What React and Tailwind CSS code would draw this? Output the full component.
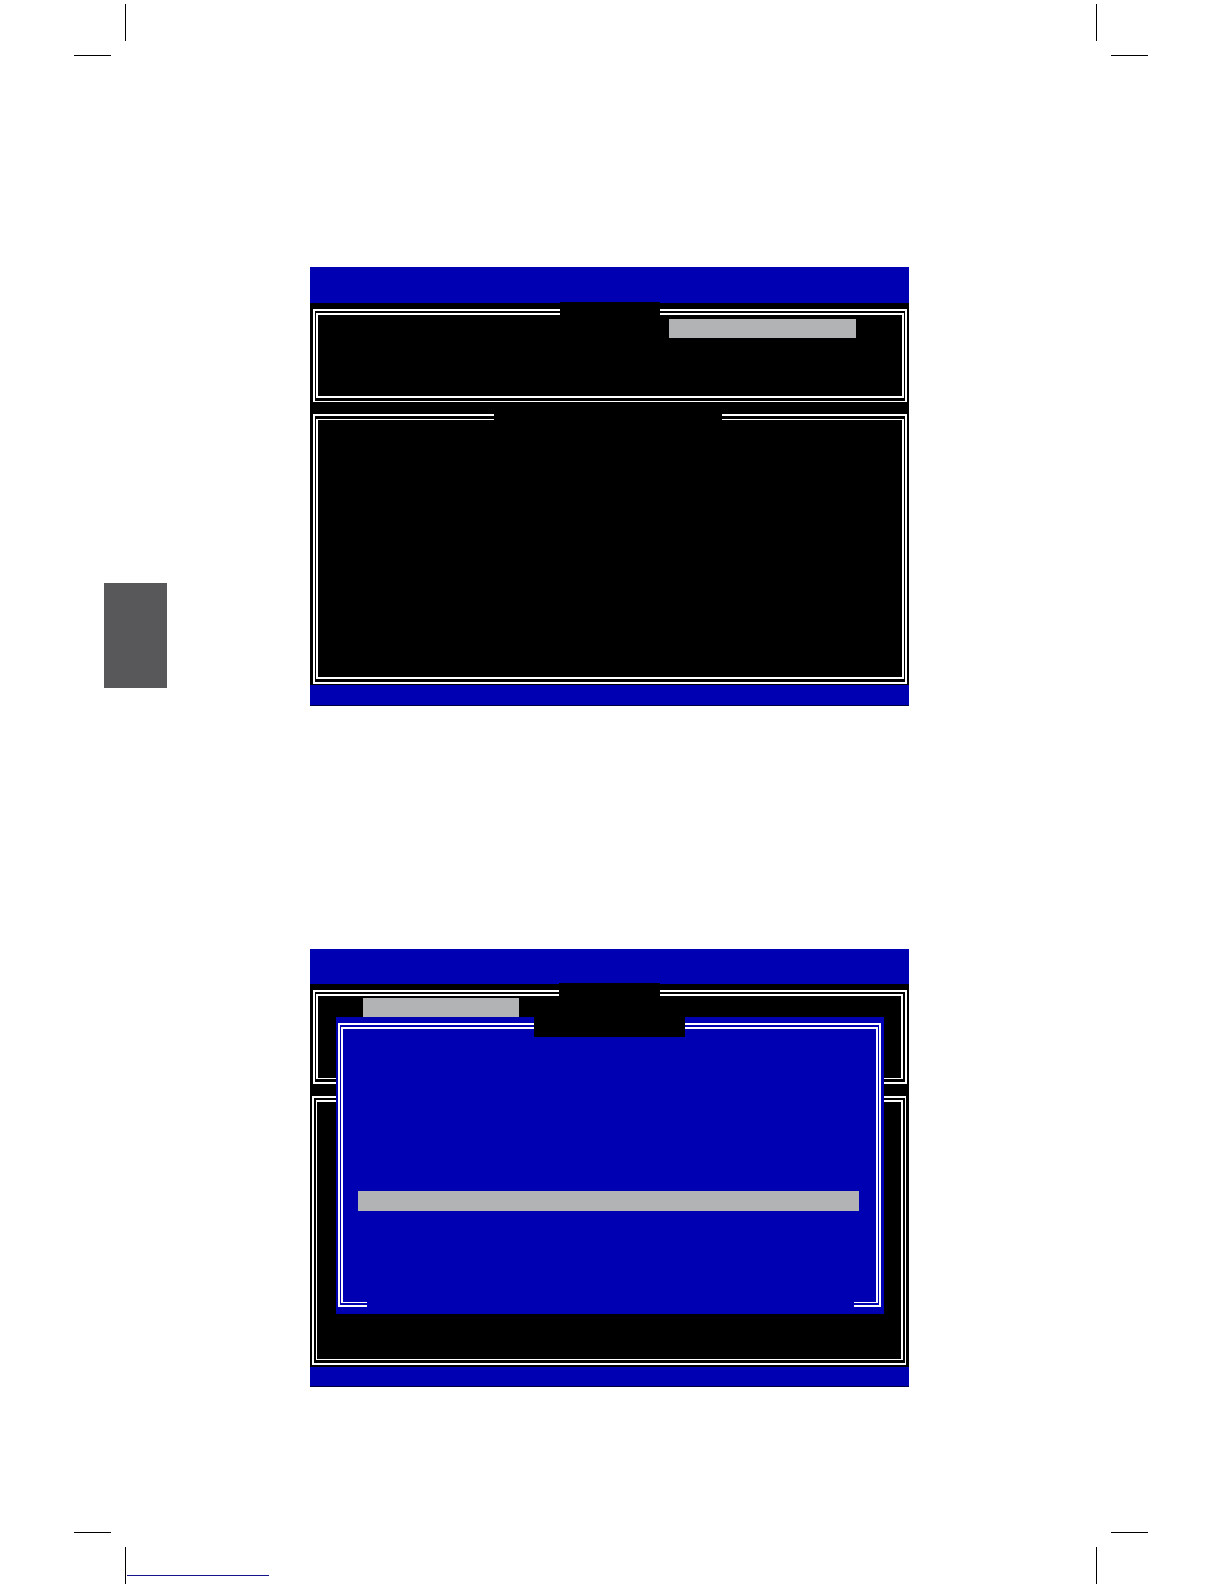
function CropMark({ side = 'left', bottom = false }) {
  const row = side === 'left' ? 'flex-row' : 'flex-row-reverse'
  return (
    <div className={`flex h-[52px] w-[52px] shrink-0 justify-between ${row}`}>
      <div className={`h-px w-[37px] bg-black ${bottom ? 'self-start' : 'self-end'}`}></div>
      <div className={`h-[37px] w-px bg-black ${bottom ? 'self-end' : 'self-start'}`}></div>
    </div>
  )
}

// double line box, the title block covers part of the top border
function Frame({ className = '', outer, inner, title, children }) {
  return (
    <section className={`relative flex border-white ${outer} ${className}`}>
      <div className={`min-w-0 flex-1 border-white ${inner}`}>{children}</div>
      {title && <div className={`absolute bg-black ${title}`}></div>}
    </section>
  )
}

function BiosScreen({ header, footer, children }) {
  return (
    <div className="relative flex flex-col bg-black">
      <header className={`bg-[#0000b3] ${header}`}></header>
      {children}
      <footer className={`border-b border-[#00003c] bg-[#0000b3] ${footer}`}></footer>
    </div>
  )
}

function MenuScreen() {
  return (
    <BiosScreen header="h-9" footer="h-[21px]">
      <div className="flex flex-col gap-3 pt-1.5 pr-0.5 pb-px pl-[3px]">
        <Frame
          className="min-h-[93px]"
          outer="border-2 border-b px-px pt-0.5 pb-[3px]"
          inner="border-2"
          title="-top-[9px] left-[245px] h-4 w-[100px]"
        >
          <div className="mt-1 mr-[46px] ml-auto h-[19px] w-[187px] bg-[#b1b3b4]"></div>
        </Frame>
        <Frame
          className="min-h-[270px]"
          outer="border-2 px-px py-[3px]"
          inner="border-2 border-t"
          title="-top-1 left-[179px] h-3 w-[228px]"
        />
      </div>
    </BiosScreen>
  )
}

function DialogScreen() {
  return (
    <BiosScreen header="h-[35px]" footer="h-5">
      <div className="flex flex-col gap-3 pt-1.5 pb-0.5">
        <Frame
          className="mr-0.5 ml-[3px] min-h-[94px]"
          outer="border-2 pt-0.5 pr-0.5 pb-[3px] pl-px"
          inner="border-2 border-b"
          title="-top-[9px] left-[244px] h-10 w-[101px]"
        >
          <div className="mt-0.5 ml-[45px] h-[19px] w-[156px] bg-[#b1b3b4]"></div>
        </Frame>
        <Frame
          className="mr-[3px] ml-0.5 min-h-[269px]"
          outer="border-2 border-r pt-0.5 pr-0.5 pb-[3px] pl-0.5"
          inner="border-2 border-b border-l"
        />
      </div>

      {/* dialog box on top of the two panels */}
      <div className="absolute top-[68px] right-[25px] left-[26px] bg-[#0000b3] pt-1.5 pr-[3px] pb-[7px] pl-0.5">
        <Frame
          className="min-h-[284px]"
          outer="border-2 px-px py-0.5"
          inner="border-2 border-b"
          title="-top-2 left-[194px] h-5 w-[151px]"
        >
          <div className="mt-[162px] mr-[17px] ml-[15px] h-5 bg-[#b1b3b4]"></div>
        </Frame>
        <div className="absolute right-[30px] bottom-[7px] left-[31px] h-2 bg-[#0000b3]"></div>
      </div>
    </BiosScreen>
  )
}

function App() {
  return (
    <div className="flex min-h-screen flex-col bg-white pt-1">
      <div className="flex justify-between pr-[76px] pl-[74px]">
        <CropMark />
        <CropMark side="right" />
      </div>

      <div className="flex flex-1 pt-[211px] pb-[145px] pl-[104px]">
        {/* chapter tab */}
        <aside className="mt-[316px] h-[105px] w-[63px] shrink-0 bg-[#58585a]"></aside>
        <main className="ml-[143px] flex max-w-[599px] flex-1 flex-col gap-[243px]">
          <MenuScreen />
          <DialogScreen />
        </main>
      </div>

      <div className="flex pr-[76px] pl-[74px]">
        <CropMark bottom />
        <a
          href="#"
          aria-label="Website"
          className="mb-2 ml-px flex h-4 w-[142px] items-end self-end"
        >
          <span className="h-px flex-1 bg-[#14148c]"></span>
        </a>
        <div className="ml-auto">
          <CropMark side="right" bottom />
        </div>
      </div>
    </div>
  )
}

export default App
